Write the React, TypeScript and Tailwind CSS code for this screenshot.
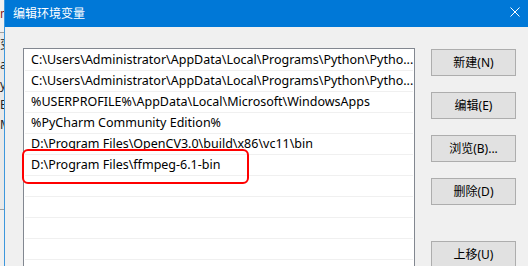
const rows = [
  'C:\\Users\\Administrator\\AppData\\Local\\Programs\\Python\\Pytho...',
  'C:\\Users\\Administrator\\AppData\\Local\\Programs\\Python\\Pytho...',
  '%USERPROFILE%\\AppData\\Local\\Microsoft\\WindowsApps',
  '%PyCharm Community Edition%',
  'D:\\Program Files\\OpenCV3.0\\build\\x86\\vc11\\bin',
  'D:\\Program Files\\ffmpeg-6.1-bin',
  '',
  '',
  '',
  '',
  '',
];

function Btn({ label, className = '' }: { label: string; className?: string }) {
  return (
    <div
      className={`h-[27px] w-[85px] shrink-0 flex items-center justify-center bg-[#e1e1e1] border border-[#adadad] text-[12px] text-black ${className}`}
    >
      {label}
    </div>
  );
}

export default function App() {
  return (
    <div
      className="relative w-[528px] h-[266px] overflow-hidden flex bg-[#f0f0f0]"
      style={{ fontFamily: '"Noto Sans", "Noto Sans CJK SC", sans-serif' }}
    >
      {/* window behind, mostly hidden */}
      <div className="w-[4px] shrink-0 overflow-hidden bg-[#f0f0f0] text-[12px] leading-[20px] text-[#222]">
        <div className="h-[32px] pt-[4px] text-[#8a1c1c]">m</div>
        <div className="border-t border-[#a0a0a0] bg-[#e9e9e9] pt-[2px]">
          <div>变</div>
          <div>a</div>
          <div>y</div>
          <div>E</div>
          <div>M</div>
          <div className="h-[74px]" />
        </div>
        <div className="border-t border-[#a0a0a0] h-[60px]" />
      </div>
      <div className="w-px shrink-0 bg-[#3d97dc]" />

      {/* dialog */}
      <div className="flex-1 min-h-0 flex flex-col">
        <div className="h-[27px] shrink-0 bg-[#0078d7] flex items-center justify-between pl-[8px] pr-[8px]">
          <span className="text-white text-[12px] leading-none pt-[1px]">编辑环境变量</span>
          <svg width="10" height="10" viewBox="0 0 10 10" className="mb-[4px]">
            <path d="M0.5 0.5L9.5 9.5M9.5 0.5L0.5 9.5" stroke="white" strokeWidth="1" />
          </svg>
        </div>

        <div className="flex-1 min-h-0 overflow-hidden flex items-start pl-[18px] pt-[21px]">
          <div className="w-[392px] shrink-0 border border-[#828790] border-b-0 bg-white pt-[1px] px-[1px] overflow-hidden">
            {rows.map((r, i) => (
              <div
                key={i}
                className="h-[21px] border-b border-[#f0f0f0] pl-[6px] flex items-center text-[12.5px] text-black whitespace-nowrap"
              >
                {r}
              </div>
            ))}
          </div>

          <div className="ml-[16px] pt-[1px] flex flex-col">
            <Btn label="新建(N)" />
            <Btn label="编辑(E)" className="mt-[16px]" />
            <Btn label="浏览(B)..." className="mt-[16px]" />
            <Btn label="删除(D)" className="mt-[16px]" />
            <Btn label="上移(U)" className="mt-[36px]" />
          </div>
        </div>
      </div>

      {/* red annotation box */}
      <div className="absolute left-[22px] top-[149px] w-[227px] h-[35px] border-2 border-[#ff0000] rounded-[6px]" />
    </div>
  );
}
